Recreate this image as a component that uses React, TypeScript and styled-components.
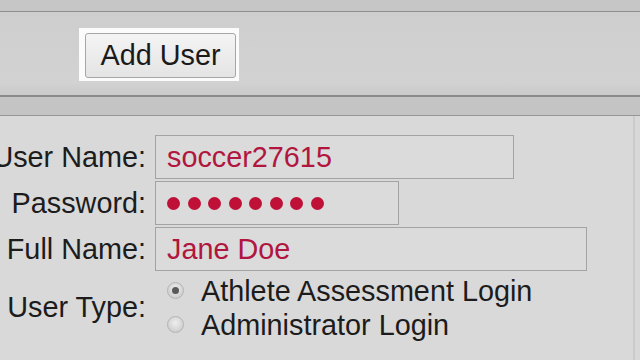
import { FC } from 'react';
import styled, { createGlobalStyle } from 'styled-components';

const GlobalStyle = createGlobalStyle`
  html, body {
    margin: 0;
    padding: 0;
    background: #d8d8d8;
    overflow: hidden;
  }

  body {
    font-family: 'Liberation Sans', Arial, sans-serif;
    color: #1c1c1c;
  }
`;

type Field = { label: string; value: string; width: number };

const fields: Field[] = [
  { label: 'User Name:', value: 'soccer27615', width: 359 },
  { label: 'Password:', value: '', width: 244 },
  { label: 'Full Name:', value: 'Jane Doe', width: 432 },
];

const userTypes = [
  { label: 'Athlete Assessment Login', checked: true },
  { label: 'Administrator Login', checked: false },
];

const App: FC = () => (
  <Page>
    <GlobalStyle />
    <TopStrip />
    <Toolbar>
      <Highlight>
        <AddButton type="button">Add User</AddButton>
      </Highlight>
    </Toolbar>
    <SubBar />
    <Form>
      {fields.map(({ label, value, width }) => (
        <Row key={label}>
          <Label>{label}</Label>
          <Input $width={width}>
            {label === 'Password:'
              ? Array.from({ length: 8 }, (_, i) => <Dot key={i} />)
              : value}
          </Input>
        </Row>
      ))}
      <Row>
        <Label>User Type:</Label>
        <Options>
          {userTypes.map(({ label, checked }) => (
            <Option key={label}>
              <Radio $checked={checked} />
              {label}
            </Option>
          ))}
        </Options>
      </Row>
    </Form>
  </Page>
);

export default App;

const Page = styled.div`
  width: 640px;
  height: 360px;
  overflow: hidden;
  display: flex;
  flex-direction: column;
`;

const TopStrip = styled.div`
  height: 11px;
  background: #c6c6c6;
  border-bottom: 1px solid #8e8e8e;
`;

const Toolbar = styled.div`
  height: 83px;
  display: flex;
  align-items: center;
  padding-left: 79px;
  background: linear-gradient(#cecece, #d2d2d2 85%, #c9c9c9);
  border-bottom: 2px solid #8a8a8a;
`;

const Highlight = styled.div`
  display: flex;
  padding: 5px 3px 3px 6px;
  margin-top: 1px;
  background: #fbfbfb;
`;

const AddButton = styled.button`
  width: 151px;
  height: 45px;
  padding: 0;
  border: 1px solid #a6a6a6;
  border-radius: 3px;
  background: linear-gradient(#f4f4f4, #e4e4e4);
  font-family: 'Liberation Sans', Arial, sans-serif;
  font-size: 28.8px;
  color: #1a1a1a;
`;

const SubBar = styled.div`
  height: 18px;
  background: #c4c4c4;
  border-bottom: 1px solid #979797;
`;

const Form = styled.div`
  flex: 1;
  display: flex;
  flex-direction: column;
  gap: 2px;
  padding-top: 19px;
  margin-right: 5px;
  border-right: 2px solid #cbcbcb;
  background: #d9d9d9;
`;

const Row = styled.div`
  display: flex;
  align-items: center;
  gap: 9px;
`;

const Label = styled.div`
  width: 146px;
  flex: none;
  display: flex;
  justify-content: flex-end;
  white-space: nowrap;
  font-size: 28.8px;
`;

const Input = styled.div<{ $width: number }>`
  width: ${({ $width }) => $width}px;
  height: 44px;
  box-sizing: border-box;
  display: flex;
  align-items: center;
  gap: 7.5px;
  padding: 0 10px 0 11px;
  border: 1.5px solid #a3a3a3;
  background: #dbdbdb;
  font-size: 28.8px;
  color: #b0163e;
  white-space: nowrap;
`;

const Dot = styled.span`
  width: 13px;
  height: 13px;
  border-radius: 50%;
  background: #bf1038;
  flex: none;
`;

const Options = styled.div`
  display: flex;
  flex-direction: column;
  padding-top: 1px;
`;

const Option = styled.div`
  display: flex;
  align-items: center;
  height: 34px;
  gap: 17px;
  padding-left: 12px;
  font-size: 28.8px;
  white-space: nowrap;
`;

const Radio = styled.span<{ $checked: boolean }>`
  position: relative;
  width: 17px;
  height: 17px;
  box-sizing: border-box;
  border-radius: 50%;
  border: 1px solid #b4b4b4;
  background: radial-gradient(circle at 50% 40%, #eeeeee, #c4c4c4);
  margin-top: -2px;

  &::after {
    content: '';
    display: ${({ $checked }) => ($checked ? 'block' : 'none')};
    position: absolute;
    inset: 4px;
    border-radius: 50%;
    background: #5a5a5a;
  }
`;
